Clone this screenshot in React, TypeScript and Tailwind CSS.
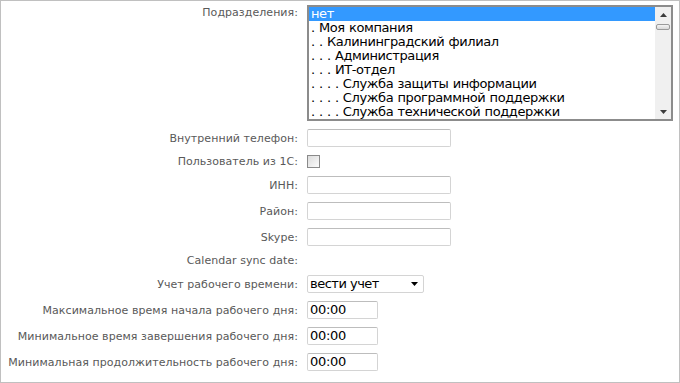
const font = { fontFamily: '"DejaVu Sans", Verdana, sans-serif' };

const options = [
  "нет",
  ". Моя компания",
  ". . Калининградский филиал",
  ". . . Администрация",
  ". . . ИТ-отдел",
  ". . . . Служба защиты информации",
  ". . . . Служба программной поддержки",
  ". . . . Служба технической поддержки",
];

function Label({ children, top }: { children: React.ReactNode; top?: boolean }) {
  return (
    <div
      className={`w-[298px] shrink-0 pr-[1px] text-right text-[11px] leading-[13px] tracking-[0.05px] text-[#595959] ${
        top ? "self-start pt-[1px]" : ""
      }`}
    >
      {children}
    </div>
  );
}

function TextInput({ w = "w-[144px]", value }: { w?: string; value?: string }) {
  return (
    <div
      className={`${w} h-[18px] rounded-[2px] border border-[#d4d4d4] border-t-[#bdbdbd] bg-white px-[2px] text-[13px] leading-[16px] tracking-[-0.3px] text-black`}
    >
      {value}
    </div>
  );
}

function Row({ h, children }: { h: string; children: React.ReactNode }) {
  return <div className={`flex ${h} items-center gap-[8px] py-[4px]`}>{children}</div>;
}

export default function App() {
  return (
    <div className="h-[383px] w-[680px] bg-white" style={font}>
      <div className="h-[383px] border border-[#c0c0c0] pb-[7px]">
        <Row h="h-[124px]">
          <Label top>Подразделения:</Label>
          <div className="flex h-[116px] w-[366px] border-2 border-[#8c8c8c] bg-white">
            <div className="flex-1">
              {options.map((o, i) => (
                <div
                  key={o}
                  className={`h-[14px] whitespace-nowrap pl-[2px] text-[13px] leading-[14px] tracking-[-0.4px] [word-spacing:0.5px] ${
                    i === 0 ? "bg-[#3399ff] text-white" : "text-black"
                  }`}
                >
                  {o}
                </div>
              ))}
            </div>
            <div className="relative w-[16px] bg-[#f0f0f0]">
              <svg className="absolute left-[5px] top-[6px]" width="7" height="4" viewBox="0 0 7 4">
                <path d="M3.5 0 L7 4 L0 4 Z" fill="#3c3c3c" />
              </svg>
              <div className="absolute left-[1px] top-[17px] h-[6px] w-[14px] rounded-[2px] border border-[#9a9a9a] bg-gradient-to-b from-[#f4f4f4] to-[#d8d8d8]" />
              <svg className="absolute left-[5px] bottom-[5px]" width="7" height="4" viewBox="0 0 7 4">
                <path d="M0 0 L7 0 L3.5 4 Z" fill="#3c3c3c" />
              </svg>
            </div>
          </div>
        </Row>
        <Row h="h-[26px]">
          <Label>Внутренний телефон:</Label>
          <TextInput />
        </Row>
        <Row h="h-[21px]">
          <Label>Пользователь из 1С:</Label>
          <div className="h-[13px] w-[13px] border border-[#8a8a8a] bg-gradient-to-br from-[#dcdcdc] to-[#fbfbfb]" />
        </Row>
        <Row h="h-[26px]">
          <Label>ИНН:</Label>
          <TextInput />
        </Row>
        <Row h="h-[26px]">
          <Label>Район:</Label>
          <TextInput />
        </Row>
        <Row h="h-[26px]">
          <Label>Skype:</Label>
          <TextInput />
        </Row>
        <Row h="h-[21px]">
          <Label>Calendar sync date:</Label>
        </Row>
        <Row h="h-[26px]">
          <Label>Учет рабочего времени:</Label>
          <div className="flex h-[18px] w-[117px] items-center justify-between rounded-[2px] border border-[#d4d4d4] bg-white pl-[2px] pr-[5px] text-[13px] leading-[16px] tracking-[-0.5px] text-black">
            <span>вести учет</span>
            <svg width="7" height="4" viewBox="0 0 7 4">
              <path d="M0 0 L7 0 L3.5 4 Z" fill="#000" />
            </svg>
          </div>
        </Row>
        <Row h="h-[26px]">
          <Label>Максимальное время начала рабочего дня:</Label>
          <TextInput w="w-[71px]" value="00:00" />
        </Row>
        <Row h="h-[26px]">
          <Label>Минимальное время завершения рабочего дня:</Label>
          <TextInput w="w-[71px]" value="00:00" />
        </Row>
        <Row h="h-[26px]">
          <Label>Минимальная продолжительность рабочего дня:</Label>
          <TextInput w="w-[71px]" value="00:00" />
        </Row>
      </div>
    </div>
  );
}
